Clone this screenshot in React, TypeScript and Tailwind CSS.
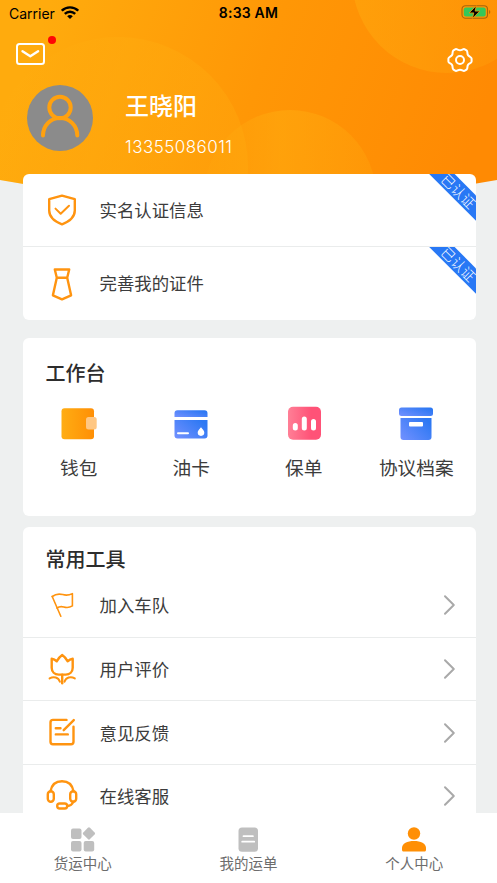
import React from "react";

type RowProps = {
  icon: React.ReactNode;
  label: string;
};

const RibbonRow: React.FC<RowProps> = ({ icon, label }) => (
  <div className="relative flex h-[73px] items-center overflow-hidden pl-[23px]">
    <div className="w-8">{icon}</div>
    <span className="ml-[22px] text-[17.4px] text-[#3c3c3c]">{label}</span>
    <div className="absolute top-[7.5px] right-[-33px] flex h-[17.5px] w-[100px] rotate-45 items-center justify-center bg-[#2878f5] text-[14px] leading-none font-light text-white">
      已认证
    </div>
  </div>
);

const ToolRow: React.FC<RowProps> = ({ icon, label }) => (
  <div className="flex h-[63.7px] shrink-0 items-center border-b border-[#eaecec] pr-[20px] pl-[23px]">
    <div className="w-8">{icon}</div>
    <span className="ml-[22px] flex-1 text-[17.4px] text-[#3c3c3c]">
      {label}
    </span>
    <svg width="13" height="22" viewBox="0 0 13 22" fill="none">
      <path
        d="M2 2.2l8.8 8.8L2 19.8"
        stroke="#a9a9a9"
        strokeWidth="2"
        strokeLinecap="round"
        strokeLinejoin="round"
      />
    </svg>
  </div>
);

const LineIcon: React.FC<{ children: React.ReactNode }> = ({ children }) => (
  <svg
    width="32"
    height="34"
    viewBox="0 0 32 34"
    fill="none"
    stroke="#ff9410"
    strokeWidth="2.4"
    strokeLinecap="round"
    strokeLinejoin="round"
  >
    {children}
  </svg>
);

const ShieldIcon = () => (
  <LineIcon>
    <path d="M16 2.6L3.2 6.2v11.400c0 6.300 5.200 10.900 12.800 13.700 7.600-2.800 12.800-7.400 12.800-13.700V6.200z" />
    <path d="M9.500 15.600l5.200 5.100 8.300-8" strokeWidth="2" />
  </LineIcon>
);

const TieIcon = () => (
  <LineIcon>
    <path d="M8.800 2.500h14.400l-2 8.200H10.800zM10.800 10.700L6.900 28.300l9.100 4 9.100-4-3.900-17.600" />
  </LineIcon>
);

const FlagIcon = () => (
  <LineIcon>
    <g strokeWidth="1.600">
      <path d="M6.200 8.500l8.600 19.700" />
      <path d="M6.200 8.500c3.400-2.500 7-2.900 10.500-1.900 3.600 1 6.400.700 9.700-1v12.300c-3 1.900-5.700 2-8.600 1.100-2.800-.900-5-.3-6.900 1" />
    </g>
  </LineIcon>
);

const TulipIcon = () => (
  <LineIcon>
    <path d="M5.700 6.800c2 .2 3.600 1 5.100 2.500 1.300-2.600 3-4.700 5.400-6.300 2.400 1.600 4.100 3.700 5.400 6.300 1.500-1.500 3.100-2.300 5.100-2.500v9c0 4-3 6.800-7 6.800h-7c-4 0-7-2.800-7-6.800z" />
    <path d="M16.200 22.600V31.200" />
    <path d="M3.600 26.400c4-2.200 8.900-1.200 10.300 3.400M28.800 26.400c-4-2.200-8.900-1.200-10.300 3.400" strokeWidth="2" />
  </LineIcon>
);

const FeedbackIcon = () => (
  <LineIcon>
    <path d="M20.500 3.900H7a2.500 2.500 0 0 0-2.500 2.500v19.300a2.500 2.500 0 0 0 2.500 2.500h18a2.500 2.500 0 0 0 2.500-2.500V10.700" />
    <path d="M27.800 4.100L17.700 14.200M9.800 12.200h4.700M9.800 18.400h12" />
  </LineIcon>
);

const HeadsetIcon = () => (
  <LineIcon>
    <path d="M4.500 12.300C5.600 6 9.900 2.200 16 2.200s10.400 3.800 11.500 10.100" />
    <rect x="1.800" y="12.300" width="6" height="10.400" rx="3" />
    <rect x="24.200" y="12.300" width="6" height="10.400" rx="3" />
    <path d="M27.300 22.700c-1 2.800-3 4.300-6.100 4.300" />
    <rect x="11.200" y="24.500" width="10" height="5" rx="2.500" />
  </LineIcon>
);

const WalletIcon = () => (
  <svg width="36" height="36" viewBox="0 0 36 36">
    <defs>
      <linearGradient id="wallet">
        <stop stopColor="#ffad13" />
        <stop offset="1" stopColor="#ff8f05" />
      </linearGradient>
    </defs>
    <rect x="0.500" y="2.300" width="32.500" height="31" rx="3" fill="url(#wallet)" />
    <rect x="25" y="11" width="10.700" height="12.500" rx="2.500" fill="#ffc783" />
  </svg>
);

const OilCardIcon = () => (
  <svg width="36" height="36" viewBox="0 0 36 36">
    <defs>
      <linearGradient id="blue" x1="0" y1="1" x2="1" y2="0.300">
        <stop stopColor="#7391ff" />
        <stop offset="1" stopColor="#2d78f3" />
      </linearGradient>
    </defs>
    <path d="M1.500 11V7.200a3 3 0 0 1 3-3h27a3 3 0 0 1 3 3V11z" fill="url(#blue)" />
    <path d="M1.500 14h33v15.500a3 3 0 0 1-3 3h-27a3 3 0 0 1-3-3z" fill="url(#blue)" />
    <path d="M5 27.300h10" stroke="#fff" strokeWidth="2" strokeLinecap="round" />
    <path d="M28 21.300c1.700 2 3.300 3.700 3.300 5.300a3.300 3.300 0 0 1-6.600 0c0-1.600 1.600-3.300 3.300-5.300z" fill="#fff" />
  </svg>
);

const PolicyIcon = () => (
  <svg width="36" height="36" viewBox="0 0 36 36">
    <defs>
      <linearGradient id="pink">
        <stop stopColor="#ff7f96" />
        <stop offset="0.700" stopColor="#ff5277" />
      </linearGradient>
    </defs>
    <rect x="2" y="0.800" width="33" height="33" rx="5" fill="url(#pink)" />
    <path d="M9.300 19.500v2.500M18.300 13v9M27.500 15.500v6.500" stroke="#fff" strokeWidth="5" strokeLinecap="round" />
  </svg>
);

const ArchiveIcon = () => (
  <svg width="36" height="36" viewBox="0 0 36 36">
    <rect x="1" y="1.500" width="34" height="8.500" rx="2.500" fill="url(#blue)" />
    <path d="M2.500 12h31v19a3 3 0 0 1-3 3h-25a3 3 0 0 1-3-3z" fill="url(#blue)" />
    <rect x="11" y="16" width="14" height="4.500" rx="1" fill="#fff" />
  </svg>
);

const GearIcon = () => (
  <svg
    className="mt-[21px]"
    width="26"
    height="26"
    viewBox="0 0 26 26"
    fill="none"
    stroke="#fff"
    strokeWidth="2"
    strokeLinejoin="round"
  >
    <path d="M8.200 2.300C9.800 1.400 10.800 3.300 13 3.300s3.200-1.900 4.800-1l1.700 1c1.600 1.200.300 3.600 1.600 5s3.500 1.500 3.500 3.300v2.800c0 1.800-2.200 1.900-3.500 3.300s0 3.800-1.600 5l-1.700 1c-1.600.900-2.600-1-4.800-1s-3.200 1.900-4.800 1l-1.700-1c-1.600-1.200-.300-3.600-1.600-5s-3.500-1.500-3.500-3.300v-2.800c0-1.800 2.200-1.900 3.500-3.300s0-3.800 1.600-5z" />
    <circle cx="13" cy="13" r="4" />
  </svg>
);

const workbench = [
  { label: "钱包", icon: <WalletIcon /> },
  { label: "油卡", icon: <OilCardIcon /> },
  { label: "保单", icon: <PolicyIcon /> },
  { label: "协议档案", icon: <ArchiveIcon /> },
];

const tools = [
  { label: "加入车队", icon: <FlagIcon /> },
  { label: "用户评价", icon: <TulipIcon /> },
  { label: "意见反馈", icon: <FeedbackIcon /> },
  { label: "在线客服", icon: <HeadsetIcon /> },
];

const tabs = [
  {
    label: "货运中心",
    icon: (
      <svg width="28" height="26" viewBox="0 0 28 26" fill="#bfbfbf">
        <rect x="2" y="2.500" width="10.500" height="10.500" rx="2" />
        <rect x="2" y="15" width="10.500" height="10.500" rx="2" />
        <rect x="14.700" y="15" width="10.500" height="10.500" rx="2" />
        <rect x="15.200" y="2.700" width="9.500" height="9.500" rx="1.500" transform="rotate(45 19.950 7.450)" />
      </svg>
    ),
  },
  {
    label: "我的运单",
    icon: (
      <svg width="28" height="26" viewBox="0 0 28 26">
        <rect x="4.500" y="1.400" width="19.500" height="24.300" rx="3.500" fill="#bfbfbf" />
        <path d="M9.500 10.200h9.400M8.200 15.700h12" stroke="#fff" strokeWidth="1.800" strokeLinecap="round" />
      </svg>
    ),
  },
  {
    label: "个人中心",
    icon: (
      <svg width="28" height="26" viewBox="0 0 28 26" fill="#ff8f05">
        <circle cx="14" cy="7.500" r="6.200" />
        <path d="M2 24v-2.200c0-4.200 5.300-6.900 12-6.900s12 2.700 12 6.900v2.200c0 .900-.600 1.500-1.500 1.500h-21c-.900 0-1.500-.600-1.500-1.500z" />
      </svg>
    ),
  },
];

const HeaderBackground = () => (
  <svg className="absolute top-0 left-0" width="497" height="210" viewBox="0 0 497 210">
    <defs>
      <linearGradient id="header" gradientUnits="userSpaceOnUse" x1="0" y1="140" x2="420" y2="290">
        <stop stopColor="#ffab0d" />
        <stop offset="0.500" stopColor="#ff9706" />
        <stop offset="1" stopColor="#ff8a03" />
      </linearGradient>
      <linearGradient id="bubble" x1="0" y1="0" x2="1" y2="0.300">
        <stop stopColor="#ffae10" stopOpacity="0" />
        <stop offset="0.500" stopColor="#ffae10" stopOpacity="0.350" />
        <stop offset="1" stopColor="#ffae10" stopOpacity="0.300" />
      </linearGradient>
      <linearGradient id="bubbleTop" x1="0" y1="0" x2="1" y2="0">
        <stop stopColor="#ffae10" stopOpacity="0.450" />
        <stop offset="1" stopColor="#ffae10" stopOpacity="0.150" />
      </linearGradient>
      <linearGradient id="bubbleBottom" x1="0" y1="0" x2="1" y2="0">
        <stop stopColor="#ffae10" stopOpacity="0.100" />
        <stop offset="0.450" stopColor="#ffae10" stopOpacity="0.500" />
        <stop offset="1" stopColor="#ffae10" stopOpacity="0.250" />
      </linearGradient>
      <clipPath id="curve">
        <path d="M0 0h497v180Q248 225 0 180z" />
      </clipPath>
    </defs>
    <g clipPath="url(#curve)">
      <rect width="497" height="210" fill="url(#header)" />
      <circle cx="118" cy="167" r="130" fill="url(#bubble)" />
      <circle cx="447" cy="-22" r="95" fill="url(#bubbleTop)" />
      <circle cx="290" cy="196" r="86" fill="url(#bubbleBottom)" />
    </g>
  </svg>
);

const StatusBar = () => (
  <div className="grid h-[26px] grid-cols-3 items-center pr-[6px] pl-[9px] font-['Inter','Liberation_Sans',sans-serif] text-[14px] text-black">
    <div className="flex items-center gap-[6px]">
      <span className="text-[14px]">Carrier</span>
      <svg className="-mt-[2px]" width="18" height="13" viewBox="0 0 18 13" fill="none" stroke="#000" strokeWidth="2.400">
        <path d="M.8 4.700c4.600-4.500 11.800-4.500 16.400 0M3.800 7.900c3-2.900 7.400-2.900 10.400 0" />
        <path d="M6.200 10.200c1.600-1.500 4-1.500 5.600 0L9 13z" fill="#000" stroke="none" />
      </svg>
    </div>
    <span className="-mt-px -ml-[3px] text-center text-[14px] font-semibold tracking-[0.200px]">
      8:33 AM
    </span>
    <svg className="-mt-[2px] justify-self-end" width="30" height="14" viewBox="0 0 30 14">
      <rect x="1" y="0.700" width="25.500" height="12.500" rx="3.500" fill="none" stroke="#a8650b" strokeWidth="1.100" />
      <rect x="2.800" y="2.400" width="21.900" height="9.100" rx="2" fill="#35c759" />
      <path d="M28.200 5v4c1.400-.700 1.400-3.300 0-4z" fill="#a8650b" />
      <path d="M15.300.6L8.200 7.900h4.600l-1.400 5.600 7.400-7.400h-4.700z" fill="#000" stroke="#ff9a08" strokeWidth="0.800" />
    </svg>
  </div>
);

export default function App() {
  return (
    <div className="relative flex h-[883px] w-[497px] flex-col overflow-hidden bg-[#eef0f0] font-['Noto_Sans_CJK_SC',sans-serif]">
      <HeaderBackground />

      <div className="relative h-[174px] shrink-0">
        <StatusBar />
        <div className="flex h-[59px] items-start justify-between pr-[24px] pl-[16px]">
          <div className="relative mt-[17px]">
            <svg width="29" height="22" viewBox="0 0 29 22" fill="none" stroke="#fff" strokeWidth="2" strokeLinecap="round" strokeLinejoin="round">
              <rect x="1" y="1" width="27" height="20" rx="2.500" />
              <path d="M6.500 8.200l7.800 5 7.800-5" strokeWidth="2.400" />
            </svg>
            <span className="absolute -top-[7px] left-[32px] size-[8px] rounded-full bg-[#ff0505]" />
          </div>
          <GearIcon />
        </div>
        <div className="flex items-start pl-[27px]">
          <svg width="66" height="66" viewBox="0 0 66 66" fill="none">
            <circle cx="33" cy="33" r="33" fill="#8b8b8b" />
            <g stroke="#ffa10f" strokeWidth="4" strokeLinecap="round">
              <circle cx="33" cy="22.500" r="10.700" />
              <path d="M16 50.500c0-9.800 7.300-17.500 17-17.500s17.300 7.700 17.300 17.500" />
            </g>
          </svg>
          <div className="ml-[32px] flex flex-col pt-[2px] text-white">
            <span className="text-[24px] leading-[36px] font-medium">王晓阳</span>
            <span className="mt-[11px] font-['Inter','Liberation_Sans',sans-serif] text-[17px] leading-[26px] font-light tracking-[0.45px]">
              13355086011
            </span>
          </div>
        </div>
      </div>

      <div className="relative mx-[22.500px] w-[453px] shrink-0 divide-y divide-[#eaecec] overflow-hidden rounded-[6px] bg-white">
        <RibbonRow icon={<ShieldIcon />} label="实名认证信息" />
        <RibbonRow icon={<TieIcon />} label="完善我的证件" />
      </div>

      <div className="mx-[22.500px] mt-[17.500px] h-[178.500px] w-[453px] shrink-0 rounded-[6px] bg-white pt-[20px]">
        <h2 className="pl-[23px] text-[20px] leading-[30px] font-medium text-[#2d2d2d]">
          工作台
        </h2>
        <div className="grid w-[450px] grid-cols-4 pt-[18.500px]">
          {workbench.map(({ label, icon }) => (
            <div key={label} className="flex flex-col items-center">
              {icon}
              <span className="mt-[11px] text-[18.700px] leading-[28px] whitespace-nowrap text-[#3c3c3c]">
                {label}
              </span>
            </div>
          ))}
        </div>
      </div>

      <div className="mx-[22.500px] mt-[11px] min-h-0 w-[453px] flex-1 overflow-hidden rounded-t-[6px] bg-white pt-[17px]">
        <h2 className="pl-[23px] text-[20px] leading-[30px] font-medium text-[#2d2d2d]">
          常用工具
        </h2>
        {tools.map((tool) => (
          <ToolRow key={tool.label} {...tool} />
        ))}
      </div>

      <nav className="grid h-[70px] shrink-0 grid-cols-3 bg-white pt-[13px]">
        {tabs.map(({ label, icon }) => (
          <div key={label} className="flex flex-col items-center">
            {icon}
            <span className="text-[14.500px] leading-[22px] text-[#6d6d6d]">
              {label}
            </span>
          </div>
        ))}
      </nav>
    </div>
  );
}
